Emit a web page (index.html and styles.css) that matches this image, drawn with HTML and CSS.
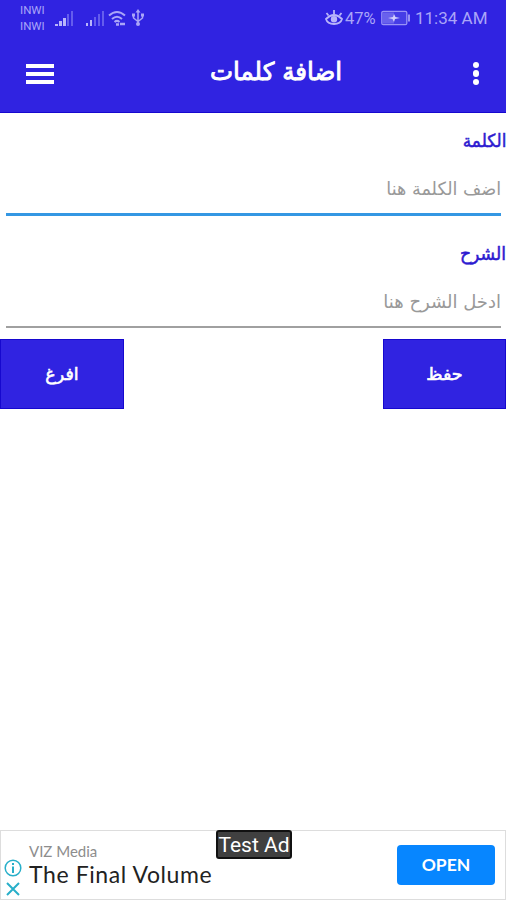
FILE: index.html
```html
<!DOCTYPE html>
<html lang="ar">
<head>
    <meta charset="UTF-8">
    <meta name="viewport" content="width=device-width, initial-scale=1.0">
    <title>اضافة كلمات</title>
    <link rel="stylesheet" href="styles.css">
</head>
<body>
    <div class="screen">
        <header class="header">
            <!-- Status bar -->
            <div class="status-bar">
                <div class="carriers"><span>INWI</span><span>INWI</span></div>
                <svg class="signal" width="18" height="17" viewBox="0 0 18 17">
                    <path d="M0 14h3v2H0zM4 11h3v5H4zM8 8h3v8H8z" fill="#b9b5fa"/>
                    <path d="M12 4h2v12h-2zM16 1h2v15h-2z" fill="#655ded"/>
                </svg>
                <svg class="signal-2" width="18" height="17" viewBox="0 0 18 17">
                    <path d="M0 13h2v3H0zM4 10h2v6H4z" fill="#b9b5fa"/>
                    <path d="M8 7h2v9H8zM12 4h2v12h-2zM16 1h2v15h-2z" fill="#655ded"/>
                </svg>
                <svg class="wifi" width="18" height="17" viewBox="0 0 18 17" fill="none" stroke="#aaa5f8" stroke-width="2">
                    <path d="M1 5.500Q9-1.500 17 5.500M4 9q5-4.500 10 0M6.500 12q2.500-2.300 5 0"/>
                    <path d="M8 14.500h3M12 14h5" stroke-width="2.500"/>
                </svg>
                <svg class="usb" width="12" height="18" viewBox="0 0 12 18" fill="none" stroke="#aaa5f8" stroke-width="1.500">
                    <path d="M6 2v13M1.500 6v3L6 12.500 10.500 9V6"/>
                    <path d="M6 0l2.500 3.500h-5zM0 4.500h3V7.500H0zM9 4.500h3V7.500H9z" fill="#aaa5f8" stroke="none"/>
                    <circle cx="6" cy="15" r="2" fill="#aaa5f8" stroke="none"/>
                </svg>
                <svg class="eye" width="18" height="16" viewBox="0 0 18 16" fill="none" stroke="#b9b5fa" stroke-width="1.800">
                    <path d="M1 9q8-8 16 0-1.500 5-8 5T1 9zM3.500 5.500L1.500 3M9 4V0M14.500 5.500l2-2.500"/>
                    <circle cx="9" cy="9.200" r="2.300" fill="#b9b5fa"/>
                </svg>
                <span class="percent">47%</span>
                <svg class="battery" width="30" height="16" viewBox="0 0 30 16">
                    <rect x=".8" y="1.300" width="25" height="13.400" rx="1.500" fill="#463de6" stroke="#9992f6" stroke-width="1.300"/>
                    <path d="M2 2.500h11v11H2z" fill="#6961ed"/>
                    <path d="M27 4.500h2v7h-2z" fill="#9992f6"/>
                    <path d="M7 8l5-1 1-3 1.500 3L19 8l-5 1-1 3-1.500-3z" fill="#d3d0fd"/>
                </svg>
                <span class="clock">11:34 AM</span>
            </div>
            <!-- Toolbar -->
            <div class="toolbar">
                <div class="menu-icon"><i></i><i></i><i></i></div>
                <h1 dir="rtl"><span>اضافة كلمات</span></h1>
                <div class="more-icon"><i></i><i></i><i></i></div>
            </div>
        </header>

        <main class="form" dir="rtl">
            <div class="field">
                <label><span class="label-word">الكلمة</span></label>
                <div class="input active"><span class="hint-word">اضف الكلمة هنا</span></div>
            </div>
            <div class="field">
                <label><span class="label-meaning">الشرح</span></label>
                <div class="input"><span class="hint-meaning">ادخل الشرح هنا</span></div>
            </div>
            <div class="buttons">
                <button class="save"><span>حفظ</span></button>
                <button class="clear"><span>افرغ</span></button>
            </div>
        </main>

        <!-- Ad banner -->
        <footer class="ad">
            <div class="ad-icons">
                <svg width="18" height="18" viewBox="0 0 18 18" fill="none" stroke="#28afc9" stroke-width="1.500">
                    <circle cx="9" cy="9" r="7.800"/>
                    <path d="M9 7.500V14M9 4v2" stroke-width="2"/>
                </svg>
                <svg width="14" height="14" viewBox="0 0 14 14" fill="none" stroke="#28afc9" stroke-width="2">
                    <path d="M1 1l12 12M13 1L1 13"/>
                </svg>
            </div>
            <div class="ad-text">
                <div class="ad-brand">VIZ Media</div>
                <div class="ad-title">The Final Volume</div>
            </div>
            <div class="ad-open">OPEN</div>
            <div class="ad-badge">Test Ad</div>
        </footer>
    </div>
</body>
</html>
```
FILE: styles.css
```css
* {
    margin: 0;
    padding: 0;
    box-sizing: border-box;
}

:root {
    --primary: #3023e1;
    --primary-dark: #1608cf;
    --status-color: #aaa5f8;
}

body {
    font-family: "DejaVu Sans", sans-serif;
    background-color: #fff;
}

span {
    display: inline-block;
    white-space: nowrap;
}

.screen {
    height: 900px;
    display: flex;
    flex-direction: column;
    overflow: hidden;
}

/* Header */
.header {
    height: 113px;
    flex: none;
    background-color: var(--primary);
    border-bottom: 1px solid var(--primary-dark);
}

.status-bar {
    height: 36px;
    padding: 0 20px;
    display: flex;
    align-items: center;
    color: var(--status-color);
    font-family: Roboto, sans-serif;
    font-size: 17px;
}

.carriers {
    width: 35px;
    display: flex;
    flex-direction: column;
    font-size: 11.5px;
    line-height: 16px;
}

.signal-2 {
    margin-left: 13px;
}

.wifi {
    margin-left: 4px;
}

.usb {
    margin-left: 6px;
}

.eye {
    margin-left: auto;
}

.percent {
    width: 33px;
    margin-left: 2px;
    font-size: 16.5px;
}

.battery {
    margin-left: 3px;
}

.clock {
    width: 71px;
    margin-left: 4px;
}

.toolbar {
    height: 75px;
    padding: 0 26px;
    display: flex;
    align-items: center;
    justify-content: space-between;
}

.menu-icon {
    width: 28px;
    display: grid;
    gap: 4px;
}

.menu-icon i {
    height: 4px;
    background-color: #fff;
}

.toolbar h1 {
    padding: 0 0 4px 26px;
    color: #fff;
    font-size: 24.5px;
    font-weight: normal;
    line-height: 30px;
    -webkit-text-stroke: 0.9px #fff;
}

.more-icon {
    width: 8px;
    display: grid;
    justify-items: center;
    gap: 2px;
}

.more-icon i {
    width: 6.5px;
    height: 6.5px;
    border-radius: 50%;
    background-color: #fff;
}

/* Form */
.form {
    flex: 1;
}

.field {
    height: 113px;
}

.field label {
    display: block;
    height: 54px;
    padding-top: 15px;
    color: #2d1bd0;
    font-size: 18px;
    line-height: 26px;
    -webkit-text-stroke: 0.5px #2d1bd0;
}

.label-word {
    transform: scaleX(0.94);
    transform-origin: right;
}

.label-meaning {
    transform: scaleX(0.96);
    transform-origin: right;
}

.input {
    height: 48px;
    margin: 0 5px 0 6px;
    padding-top: 9px;
    border-bottom: 2px solid #a0a0a0;
    color: #999;
    font-size: 18px;
    line-height: 26px;
}

.input.active {
    height: 49px;
    border-bottom: 3px solid #3497e3;
}

.hint-word {
    transform: scaleX(0.98);
    transform-origin: right;
}

.buttons {
    display: flex;
    justify-content: space-between;
}

.buttons button {
    width: 124px;
    height: 70px;
    border: 1px solid var(--primary-dark);
    background-color: var(--primary);
    color: #fff;
    font-family: inherit;
    font-size: 17.5px;
    -webkit-text-stroke: 0.6px #fff;
}

.buttons .save {
    width: 123px;
}

/* Ad */
.ad {
    position: relative;
    height: 70px;
    padding: 0 10px 0 3px;
    display: flex;
    align-items: center;
    border: 1px solid #ddd;
    font-family: Roboto, sans-serif;
}

.ad-icons {
    width: 25px;
    padding-top: 25px;
    display: flex;
    flex-direction: column;
    gap: 5px;
}

.ad-icons svg:last-child {
    margin-left: 2px;
}

.ad-text {
    flex: 1;
}

.ad-brand {
    color: #8d8d8d;
    font-family: Lato, sans-serif;
    font-size: 15px;
    line-height: 18px;
}

.ad-title {
    color: #222;
    font-family: Lato, sans-serif;
    font-size: 23px;
    line-height: 28px;
    letter-spacing: 0.6px;
}

.ad-open {
    width: 98px;
    height: 40px;
    border-radius: 4px;
    background-color: #0786ff;
    color: #fff;
    font-family: Lato, sans-serif;
    font-size: 17.5px;
    font-weight: bold;
    line-height: 40px;
    text-align: center;
}

.ad-badge {
    position: absolute;
    top: -1px;
    left: 215px;
    width: 76px;
    height: 29px;
    border: 2px solid #111;
    border-radius: 3px;
    background-color: #404040;
    color: #fff;
    font-size: 21px;
    line-height: 27px;
    text-align: center;
}
```
